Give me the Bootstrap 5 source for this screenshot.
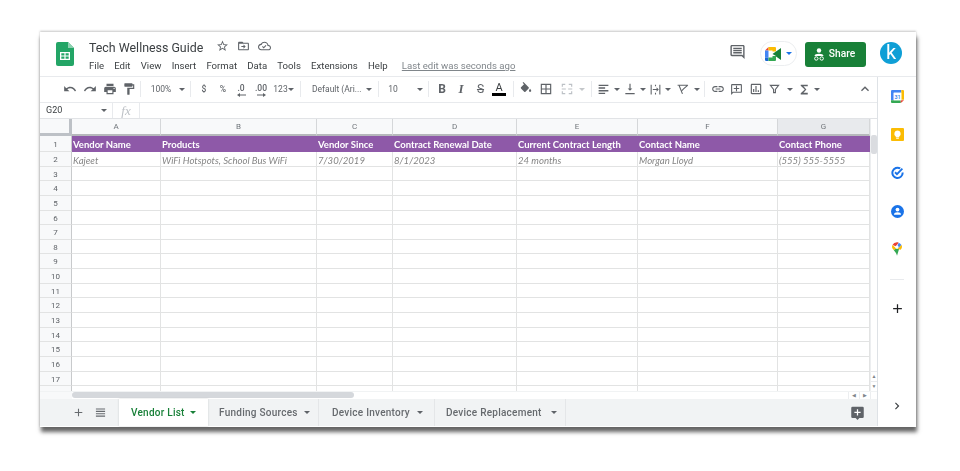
<!DOCTYPE html>
<html lang="en"><head><meta charset="utf-8"><title>Tech Wellness Guide</title>
<link href="https://cdn.jsdelivr.net/npm/bootstrap@5.3.0/dist/css/bootstrap.min.css" rel="stylesheet">
<style>
html,body{background:#fff;height:100%;overflow:hidden}
body{padding:32px 44px 0 40px;font-family:Roboto,sans-serif;color:#5f6368}
.win{width:876px;height:395px;box-shadow:0 -1px 2px rgba(90,90,90,.35),1px 5px 4px rgba(50,50,50,.75);filter:blur(.3px)}
.hdr{height:45px;border-bottom:1px solid #e8eaed}
.logo{margin:10px 15px 0 16px}
.ttl{font-size:12.4px;line-height:16px;color:#3c4043;margin-top:8px;width:114px;white-space:nowrap}
.tico{margin-top:7px;color:#5f6368;margin-left:8px}
.tico.first{margin-left:13px}
.mnu{font-size:9.6px;line-height:14px;color:#3c4043;margin-top:3px;column-gap:10.2px}
.ledit{color:#80868b;text-decoration:underline;margin-left:4px}
.cmt{margin:11px 14px 0 0;color:#5f6368}
.meet{width:37px;height:25px;border:1px solid #eceef0;border-radius:13px;margin:9px 8px 0 0}
.meet .car{border-top-color:#1a73e8}
.shr{width:61px;height:25px;margin:9.5px 14px 0 0;padding-right:3px;background:#188038;border-radius:3px;color:#fff;font-size:10.2px;font-weight:500}
.ava{width:22px;height:22px;border-radius:50%;background:#0f9fd6;color:#fff;margin:10px 14px 0 0;font-size:20px;line-height:20px;font-weight:400}
.body{height:349px}
.mainc{width:837px}
.tbar{height:26px;display:grid;align-items:center;justify-items:center;border-bottom:1px solid #e8eaed;color:#5f6368;font-size:8.5px;
grid-template-columns:20px 20px 20px 19px 19px 5px 36px 6px 10px 18px 20px 16px 24px 15px 6px 12px 60px 6px 12px 18px 15px 6px 10px 18px 20px 19px 18px 10px 15px 26px 16px 14px 4px 20px 7px 20px 5px 20px 6px 23px 5px 10px 17px 20px 19px 19px 12px 16px 10px 33px 20px 2px}
.sep{width:1px;height:16px;background:#e8eaed}
.car{width:0;height:0;border-left:3px solid transparent;border-right:3px solid transparent;border-top:3px solid #5f6368}
.car.dim{border-top-color:#c4c7ca}
.tl{justify-self:start;padding-left:6px;white-space:nowrap}
.ltr{font-family:"Liberation Serif",serif;font-size:13px;line-height:12px;color:#5f6368}
.lb{font-family:Roboto,sans-serif;font-weight:700;font-size:12px}
.ls{font-family:Roboto,sans-serif;font-size:12px;text-decoration:line-through}
.la{font-family:Roboto,sans-serif;font-size:11px;line-height:11px;color:#3c4043;border-bottom:3px solid #000;width:14px;text-align:center}
.sub{font-size:8.5px;font-weight:500;line-height:9px;text-align:center;padding-top:2px}
.sub svg{display:block;margin:0 auto}
.fbar{height:16px;border-bottom:1px solid #e1e3e6}
.nbox{width:72px;font-size:9px;color:#3c4043;padding:1px 5px 0 6px}
.fxs{font-family:"Liberation Serif",serif;font-style:italic;color:#bdc1c6;font-size:13px;width:28px;text-align:center;border-left:1px solid #e8eaed;border-right:1px solid #e8eaed;line-height:15px}
.gwrap{height:272px}
.gridc{width:830px;overflow:hidden}
.rw{display:grid;grid-template-columns:32px 89px 156px 76px 124px 121px 140px 92px;height:14.66px}
.rw>span{border-right:1px solid #e2e3e3;border-bottom:1px solid #e2e3e3;display:block;overflow:hidden;white-space:nowrap}
.rw>.rn{background:#f8f9fa;text-align:center;font-size:8px;line-height:15px;color:#5f6368;border-right-color:#c8cacc}
.rw.hd{height:17px}
.rw.hd>span{background:#f8f9fa;text-align:center;font-size:8px;line-height:15px;color:#70757a;border-bottom:2px solid #b6b8bb;border-right-color:#d5d7d9}
.rw.hd>.corner{border-right:3px solid #bdc1c6;border-bottom:3px solid #bdc1c6}
.rw.hd>.cursel{background:#e8eaed}
.rw.r1{height:16px}
.rw.r1>span{background:#8e59a8;color:#fff;font:700 9.5px/17px Lato,sans-serif;padding-left:1px;border-color:#8e59a8}
.rw.r1>.rn{background:#f8f9fa;color:#5f6368;font:400 8px/17px Roboto,sans-serif;text-align:center;padding:0;border-bottom-color:#e2e3e3;border-right-color:#c8cacc}
.rw.r2{height:15px}
.rw.r2>span{color:#858585;font:italic 400 9.6px/17px Lato,sans-serif;padding-left:1px}
.rw.r2>.rn{color:#5f6368;font:400 8px/16px Roboto,sans-serif;text-align:center;padding:0}
.vsb{width:7px;background:#fff;border-left:1px solid #eceef0}
.vth{height:19px;width:6px;background:#dadce0;border-radius:2px;margin-top:16px}
.ar{height:10px;border-top:1px solid #e8eaed;color:#80868b;font-size:5px;line-height:9px;text-align:center}
.hsb{height:8px;background:#fff;border-top:1px solid #f1f3f4}
.hpad{width:32px;background:#f8f9fa}
.hth{width:282px;height:6px;background:#d5d8dc;border-radius:3px}
.harr{width:11px;color:#80868b;font-size:5px;line-height:7px;text-align:center;border-left:1px solid #eceef0}
.hcor{width:7px;border-left:1px solid #eceef0}
.tabs{height:28px;background:#f1f3f4;font-size:10px;letter-spacing:.25px;color:#666a6e;font-weight:500}
.lft{width:79px;padding-top:7px}
.lft .plus{margin-left:32px}
.lft .lst{margin-left:10px}
.tbx{height:27px;line-height:29px;white-space:nowrap;border-right:1px solid #e4e6e8}
.tbx.on{background:#fff;color:#188038;font-weight:500;width:89px;padding-left:12px;gap:5px;border-right:0;box-shadow:0 0 2px rgba(60,64,67,.2)}
.tbx.on .car{border-top-color:#188038}
.t2{width:111px;padding-left:11px;gap:6px}
.t3{width:116px;padding-left:13px;gap:7px}
.t4{width:131px;padding-left:11px;gap:9px}
.addc{margin:6px 12px 0 auto}
.side{width:39px}
.sic{height:38.3px}
.sdv{width:14px;height:1px;background:#e8eaed;margin:11px 0 0}
.spl{margin-top:21px;color:#202124}
.sch{margin:auto 0 13px;color:#3c4043}
</style></head>
<body>
<div class="win bg-white d-flex flex-column">
 <header class="hdr d-flex">
  <svg class="logo flex-shrink-0" width="18" height="24" viewBox="0 0 18 24"><path fill="#23a566" d="M2 0h10l6 6v16a2 2 0 0 1-2 2H2a2 2 0 0 1-2-2V2a2 2 0 0 1 2-2z"/><path fill="#8ed1b1" d="M12 0l6 6h-6z"/><path fill="#fff" d="M4 10h10v8H4zm1.3 1.2v2.2h3.1v-2.2zm4.3 0v2.2h3.1v-2.2zm-4.3 3.4v2.2h3.1v-2.2zm4.3 0v2.2h3.1v-2.2z" fill-rule="evenodd"/></svg>
  <div class="flex-grow-1">
   <div class="d-flex">
    <div class="ttl">Tech Wellness Guide</div>
    <svg class="tico first" width="13" height="14" viewBox="0 0 24 24" fill="currentColor"><path d="M22 9.24l-7.19-.62L12 2 9.19 8.63 2 9.24l5.46 4.73L5.82 21 12 17.27 18.18 21l-1.63-7.03L22 9.24zM12 15.4l-3.76 2.27 1-4.28-3.32-2.88 4.38-.38L12 6.1l1.71 4.04 4.38.38-3.32 2.88 1 4.28L12 15.4z"/></svg>
    <svg class="tico" width="13" height="14" viewBox="0 0 24 24" fill="currentColor"><path d="M20 6h-8l-2-2H4c-1.1 0-2 .9-2 2v12c0 1.1.9 2 2 2h16c1.1 0 2-.9 2-2V8c0-1.1-.9-2-2-2zm0 12H4V8h16v10zM12 9l4 4-4 4v-3H8v-2h4z"/></svg>
    <svg class="tico" width="13" height="14" viewBox="0 0 24 24" fill="currentColor"><path d="M19.35 10.04C18.67 6.59 15.64 4 12 4 9.11 4 6.6 5.64 5.35 8.04 2.34 8.36 0 10.91 0 14c0 3.31 2.69 6 6 6h13c2.76 0 5-2.24 5-5 0-2.64-2.05-4.78-4.65-4.96zM19 18H6c-2.21 0-4-1.79-4-4s1.79-4 4-4h.71C7.37 7.69 9.48 6 12 6c3.04 0 5.5 2.46 5.5 5.5v.5H19c1.66 0 3 1.34 3 3s-1.34 3-3 3zm-8.5-1.5L7.5 13.5l1.4-1.4 1.6 1.6 3.6-3.6 1.4 1.4z"/></svg>
   </div>
   <div class="mnu d-flex"><span>File</span><span>Edit</span><span>View</span><span>Insert</span><span>Format</span><span>Data</span><span>Tools</span><span>Extensions</span><span>Help</span><span class="ledit">Last edit was seconds ago</span></div>
  </div>
  <svg class="cmt flex-shrink-0" width="17" height="18" viewBox="0 0 24 24" fill="currentColor"><path d="M21.99 4c0-1.1-.89-2-1.99-2H4c-1.1 0-2 .9-2 2v12c0 1.1.9 2 2 2h14l4 4-.01-18zM20 4v13.17L18.83 16H4V4h16zM6 12h12v2H6zm0-3h12v2H6zm0-3h12v2H6z"/></svg>
  <div class="meet d-flex align-items-center justify-content-center gap-1 flex-shrink-0">
   <svg width="17" height="14" viewBox="0 0 17 14"><path fill="#ea4335" d="M3.5 0L0 3.5h3.5z"/><path fill="#4285f4" d="M0 3.5h3.5v7H0z"/><path fill="#1967d2" d="M0 10.500h3.500V14H1.200A1.200 1.200 0 0 1 0 12.800z"/><path fill="#fbbc04" d="M3.500 0H10a1 1 0 0 1 1 1v3.500H7.500V3.500h-4z"/><path fill="#34a853" d="M3.500 10.500h4V9H11v4a1 1 0 0 1-1 1H3.500z"/><path fill="#188038" d="M7.500 7L11 4.500v4.500zM11 4.500L16 1v12l-5-3.500z"/></svg>
   <span class="car"></span>
  </div>
  <div class="shr d-flex align-items-center justify-content-center gap-1 flex-shrink-0">
   <svg width="12" height="13" viewBox="0 0 12 13" fill="#fff"><circle cx="6" cy="2.500" r="2.200"/><path d="M1.500 8c0-1.500 2-2.300 4.500-2.300S10.500 6.500 10.500 8z"/><circle cx="3.300" cy="10.500" r="1.700" fill="none" stroke="#fff"/><circle cx="8.700" cy="10.500" r="1.700" fill="none" stroke="#fff"/></svg>
   <span>Share</span>
  </div>
  <div class="ava text-center flex-shrink-0">k</div>
 </header>
 <div class="body d-flex">
  <div class="mainc d-flex flex-column">
   <div class="tbar">
    <span></span>
    <svg width="14" height="14" viewBox="0 0 24 24" fill="currentColor"><path d="M12.500 8c-2.650 0-5.050.99-6.900 2.600L2 7v9h9l-3.620-3.620c1.390-1.160 3.160-1.880 5.120-1.880 3.540 0 6.550 2.310 7.600 5.500l2.370-.78C21.080 11.030 17.150 8 12.500 8z"/></svg>
    <svg width="14" height="14" viewBox="0 0 24 24" fill="currentColor"><path d="M18.400 10.600C16.550 8.990 14.150 8 11.500 8c-4.650 0-8.580 3.030-9.960 7.220L3.900 16c1.050-3.190 4.050-5.500 7.600-5.500 1.950 0 3.730.72 5.120 1.880L13 16h9V7l-3.600 3.600z"/></svg>
    <svg width="14" height="14" viewBox="0 0 24 24" fill="currentColor"><path d="M19 8H5c-1.660 0-3 1.340-3 3v6h4v4h12v-4h4v-6c0-1.660-1.340-3-3-3zm-3 11H8v-5h8v5zm3-7c-.55 0-1-.45-1-1s.45-1 1-1 1 .45 1 1-.45 1-1 1zm-1-9H6v4h12V3z"/></svg>
    <svg width="14" height="14" viewBox="0 0 24 24" fill="currentColor"><path d="M18 4V3c0-.55-.45-1-1-1H5c-.55 0-1 .45-1 1v4c0 .55.45 1 1 1h12c.55 0 1-.45 1-1V6h1v4H9v11c0 .55.45 1 1 1h2c.55 0 1-.45 1-1v-9h8V4h-3z"/></svg>
    <span class="sep"></span>
    <span>100%</span><span class="car"></span><span class="sep"></span>
    <span class="fw-medium">$</span><span class="fw-medium">%</span>
    <span class="sub">.0<svg width="9" height="4" viewBox="0 0 9 4" fill="currentColor"><path d="M3 0v1.500h6v1H3V4L0 2z"/></svg></span>
    <span class="sub">.00<svg width="9" height="4" viewBox="0 0 9 4" fill="currentColor"><path d="M6 0v1.500H0v1h6V4l3-2z"/></svg></span>
    <span>123</span><span class="car"></span><span class="sep"></span>
    <span class="tl">Default (Ari...</span><span class="car"></span><span class="sep"></span>
    <span>10</span><span></span><span class="car"></span><span class="sep"></span>
    <span class="lb">B</span><span class="ltr fst-italic fw-bold">I</span><span class="ls">S</span><span class="la">A</span><span class="sep"></span>
    <svg width="14" height="14" viewBox="0 0 24 24" fill="currentColor"><path d="M16.560 8.940L7.620 0 6.210 1.410l2.380 2.380-5.150 5.150c-.59.59-.59 1.540 0 2.120l5.500 5.500c.29.29.68.44 1.060.44s.77-.15 1.060-.44l5.500-5.500c.59-.58.59-1.530 0-2.120zM19 11.500s-2 2.170-2 3.500c0 1.100.9 2 2 2s2-.9 2-2c0-1.330-2-3.500-2-3.500z"/></svg>
    <svg width="14" height="14" viewBox="0 0 24 24" fill="currentColor"><path d="M3 3v18h18V3H3zm8 16H5v-6h6v6zm0-8H5V5h6v6zm8 8h-6v-6h6v6zm0-8h-6V5h6v6z"/></svg>
    <svg width="14" height="14" viewBox="0 0 24 24" fill="#bdc1c6"><path d="M3 3h6v2H5v3H3zm12 0h6v5h-2V5h-4zM3 16h2v3h4v2H3zm16 0h2v5h-6v-2h4zM3 11h7v2H3zm11 0h7v2h-7z"/></svg>
    <span class="car dim"></span><span class="sep"></span>
    <svg width="13" height="13" viewBox="0 0 24 24" fill="currentColor"><path d="M3 3h18v2.500H3zm0 5h12v2.500H3zm0 5h18v2.500H3zm0 5h12v2.500H3z"/></svg><span class="car"></span>
    <svg width="14" height="14" viewBox="0 0 24 24" fill="currentColor"><path d="M16 11h-3V3h-2v8H8l4 4 4-4zM4 19v2h16v-2H4z"/></svg><span class="car"></span>
    <svg width="13" height="13" viewBox="0 0 24 24" fill="currentColor"><path d="M3 3h2v18H3zm16 0h2v18h-2zM7 11h7V8l4 4-4 4v-3H7zM11 3h2v3h-2zm0 15h2v3h-2z"/></svg><span class="car"></span>
    <svg width="14" height="13" viewBox="0 0 24 24" fill="none" stroke="currentColor" stroke-width="2"><path d="M2 4h19M5 5l6 15M21 4l-8 7-3 3"/></svg><span class="car"></span>
    <span class="sep"></span>
    <svg width="14" height="14" viewBox="0 0 24 24" fill="currentColor"><path d="M3.900 12c0-1.710 1.390-3.100 3.100-3.100h4V7H7c-2.760 0-5 2.240-5 5s2.240 5 5 5h4v-1.900H7c-1.710 0-3.100-1.390-3.100-3.100zM8 13h8v-2H8v2zm9-6h-4v1.900h4c1.710 0 3.100 1.390 3.100 3.100s-1.390 3.100-3.100 3.100h-4V17h4c2.760 0 5-2.240 5-5s-2.240-5-5-5z"/></svg>
    <svg width="13" height="13" viewBox="0 0 24 24" fill="currentColor"><path d="M20 2H4c-1.100 0-2 .9-2 2v18l4-4h14c1.100 0 2-.9 2-2V4c0-1.100-.9-2-2-2zm0 14H5.200L4 17.200V4h16v12zM11 5h2v4h4v2h-4v4h-2v-4H7V9h4z"/></svg>
    <svg width="14" height="14" viewBox="0 0 24 24" fill="currentColor"><path d="M19 3H5c-1.100 0-2 .9-2 2v14c0 1.100.9 2 2 2h14c1.100 0 2-.9 2-2V5c0-1.100-.9-2-2-2zm0 16H5V5h14v14zM7 12h2v5H7zm4-5h2v10h-2zm4 7h2v3h-2z"/></svg>
    <svg width="11" height="12" viewBox="0 0 24 24" fill="none" stroke="currentColor" stroke-width="2.400"><path d="M3 4h18l-7 9v7h-4v-7z"/></svg>
    <span class="car"></span>
    <svg width="13" height="13" viewBox="0 0 24 24" fill="currentColor"><path d="M18 3H5v2l7.500 7L5 19v2h13v-3H10l5.500-6L10 6h8z"/></svg>
    <span class="car"></span><span></span>
    <svg width="16" height="16" viewBox="0 0 24 24" fill="currentColor"><path d="M12 8l-6 6 1.410 1.410L12 10.830l4.590 4.580L18 14z"/></svg>
    <span></span>
   </div>
   <div class="fbar d-flex align-items-center">
    <div class="nbox d-flex justify-content-between align-items-center"><span>G20</span><span class="car"></span></div>
    <div class="fxs">fx</div>
   </div>
   <div class="gwrap d-flex">
    <div class="gridc">
     <div class="rw hd"><span class="corner"></span><span>A</span><span>B</span><span>C</span><span>D</span><span>E</span><span>F</span><span class="cursel">G</span></div>
     <div class="rw r1"><span class="rn">1</span><span>Vendor Name</span><span>Products</span><span>Vendor Since</span><span>Contract Renewal Date</span><span>Current Contract Length</span><span>Contact Name</span><span>Contact Phone</span></div>
     <div class="rw r2"><span class="rn">2</span><span>Kajeet</span><span>WiFi Hotspots, School Bus WiFi</span><span>7/30/2019</span><span>8/1/2023</span><span>24 months</span><span>Morgan Lloyd</span><span>(555) 555-5555</span></div>
     <div class="rw"><span class="rn">3</span><span></span><span></span><span></span><span></span><span></span><span></span><span></span></div>
     <div class="rw"><span class="rn">4</span><span></span><span></span><span></span><span></span><span></span><span></span><span></span></div>
     <div class="rw"><span class="rn">5</span><span></span><span></span><span></span><span></span><span></span><span></span><span></span></div>
     <div class="rw"><span class="rn">6</span><span></span><span></span><span></span><span></span><span></span><span></span><span></span></div>
     <div class="rw"><span class="rn">7</span><span></span><span></span><span></span><span></span><span></span><span></span><span></span></div>
     <div class="rw"><span class="rn">8</span><span></span><span></span><span></span><span></span><span></span><span></span><span></span></div>
     <div class="rw"><span class="rn">9</span><span></span><span></span><span></span><span></span><span></span><span></span><span></span></div>
     <div class="rw"><span class="rn">10</span><span></span><span></span><span></span><span></span><span></span><span></span><span></span></div>
     <div class="rw"><span class="rn">11</span><span></span><span></span><span></span><span></span><span></span><span></span><span></span></div>
     <div class="rw"><span class="rn">12</span><span></span><span></span><span></span><span></span><span></span><span></span><span></span></div>
     <div class="rw"><span class="rn">13</span><span></span><span></span><span></span><span></span><span></span><span></span><span></span></div>
     <div class="rw"><span class="rn">14</span><span></span><span></span><span></span><span></span><span></span><span></span><span></span></div>
     <div class="rw"><span class="rn">15</span><span></span><span></span><span></span><span></span><span></span><span></span><span></span></div>
     <div class="rw"><span class="rn">16</span><span></span><span></span><span></span><span></span><span></span><span></span><span></span></div>
     <div class="rw"><span class="rn">17</span><span></span><span></span><span></span><span></span><span></span><span></span><span></span></div>
     <div class="rw"><span class="rn"></span><span></span><span></span><span></span><span></span><span></span><span></span><span></span></div>
    </div>
    <div class="vsb d-flex flex-column"><div class="vth"></div><div class="flex-grow-1"></div><div class="ar">▲</div><div class="ar">▼</div></div>
   </div>
   <div class="hsb d-flex">
    <div class="hpad"></div><div class="hth"></div><div class="flex-grow-1"></div><div class="harr">◀</div><div class="harr">▶</div><div class="hcor"></div>
   </div>
   <div class="tabs d-flex align-items-start">
    <div class="lft d-flex align-items-center">
     <svg class="plus" width="13" height="13" viewBox="0 0 24 24" fill="currentColor"><path d="M19 13h-6v6h-2v-6H5v-2h6V5h2v6h6z"/></svg>
     <svg class="lst" width="11" height="11" viewBox="0 0 24 24" fill="currentColor"><path d="M2 3h20v2.500H2zm0 5.200h20v2.500H2zm0 5.200h20v2.500H2zm0 5.200h20v2.500H2z"/></svg>
    </div>
    <div class="tbx on d-flex align-items-center"><span>Vendor List</span><span class="car"></span></div>
    <div class="tbx t2 d-flex align-items-center"><span>Funding Sources</span><span class="car"></span></div>
    <div class="tbx t3 d-flex align-items-center"><span>Device Inventory</span><span class="car"></span></div>
    <div class="tbx t4 d-flex align-items-center"><span>Device Replacement</span><span class="car"></span></div>
    <svg class="addc" width="15" height="16" viewBox="0 0 24 24"><path fill="#5f6368" d="M4 2h16a2 2 0 0 1 2 2v14a2 2 0 0 1-2 2h-5l-3 3-3-3H4a2 2 0 0 1-2-2V4a2 2 0 0 1 2-2z"/><path fill="#fff" d="M11 6h2v4h4v2h-4v4h-2v-4H7v-2h4z"/></svg>
   </div>
  </div>
  <aside class="side d-flex flex-column align-items-center border-start">
   <div class="sic d-flex align-items-center"><svg width="13" height="13" viewBox="0 0 24 24"><path fill="#4285f4" d="M2 0h17v5H5v14H0V2a2 2 0 0 1 2-2z"/><path fill="#fbbc04" d="M19 0h3a2 2 0 0 1 2 2v16h-5z"/><path fill="#34a853" d="M5 19h13v5H2a2 2 0 0 1-2-2v-3z"/><path fill="#ea4335" d="M18 19h6l-6 5z"/><rect x="5" y="5" width="14" height="14" fill="#fff"/><text x="12" y="16" text-anchor="middle" font-size="10" font-family="Roboto" font-weight="500" fill="#1a73e8">31</text></svg></div>
   <div class="sic d-flex align-items-center"><svg width="13" height="13" viewBox="0 0 24 24"><rect width="24" height="24" rx="2" fill="#fbbc04"/><path fill="#fff" d="M12 4.500a6 6 0 0 0-3.200 11V17h6.400v-1.500A6 6 0 0 0 12 4.500zM9.500 18h5v1.800h-5z"/></svg></div>
   <div class="sic d-flex align-items-center"><svg width="13" height="13" viewBox="0 0 24 24" fill="none" stroke="#1a73e8" stroke-width="3.600"><path d="M17 4.500A9.500 9.500 0 1 0 21.500 12"/><path d="M7.500 11.500l3.500 3.500L21 5" stroke-width="3.400"/></svg></div>
   <div class="sic d-flex align-items-center"><svg width="13" height="13" viewBox="0 0 24 24"><circle cx="12" cy="12" r="12" fill="#1a73e8"/><circle cx="12" cy="8.500" r="3.500" fill="#fff"/><path fill="#fff" d="M5.500 18c0-3 3-4.500 6.500-4.500s6.500 1.500 6.500 4.500z"/></svg></div>
   <div class="sic d-flex align-items-center"><svg width="10" height="14" viewBox="0 0 18 24"><path fill="#34a853" d="M9 24c-1-4-3-6-6-10l4-3h6z"/><path fill="#fbbc04" d="M3 14c-1.500-2-3-3.500-3-6 0-1 .3-2 .8-3L8 11z"/><path fill="#ea4335" d="M.8 5A9 9 0 0 1 9 0c1 0 2 .2 3 .6L7 7z"/><path fill="#4285f4" d="M12 .6A9 9 0 0 1 17 5l-6 6-2-2z"/><path fill="#fbbc04" d="M17 5c.6 1 1 2 1 3 0 2-1 3.800-2.500 5.500L10 12z"/><circle cx="9" cy="8.500" r="3" fill="#fff"/></svg></div>
   <div class="sdv"></div>
   <svg class="spl" width="15" height="15" viewBox="0 0 24 24" fill="currentColor"><path d="M19 13h-6v6h-2v-6H5v-2h6V5h2v6h6z"/></svg>
   <svg class="sch" width="14" height="14" viewBox="0 0 24 24" fill="currentColor"><path d="M10 6L8.590 7.410 13.170 12l-4.580 4.590L10 18l6-6z"/></svg>
  </aside>
 </div>
</div>
<script src="https://cdn.jsdelivr.net/npm/bootstrap@5.3.0/dist/js/bootstrap.bundle.min.js"></script>
</body></html>
